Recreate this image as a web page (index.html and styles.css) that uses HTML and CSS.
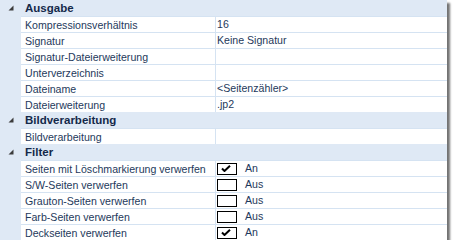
FILE: index.html
```html
<!DOCTYPE html>
<html lang="de">
<head>
    <meta charset="UTF-8">
    <title>Eigenschaften</title>
    <link rel="stylesheet" href="styles.css">
</head>
<body>
    <div class="panel">
        <div class="cat"><span class="toggle"><svg width="6" height="6" viewBox="0 0 6 6"><polygon points="5.5,0.5 5.5,5.5 0.5,5.5" fill="#3c3c3c"/></svg></span><span class="cat-title">Ausgabe</span></div>
        <div class="prop"><span class="name">Kompressionsverhältnis</span><span class="value">16</span></div>
        <div class="prop"><span class="name">Signatur</span><span class="value">Keine Signatur</span></div>
        <div class="prop"><span class="name">Signatur-Dateierweiterung</span><span class="value"></span></div>
        <div class="prop"><span class="name">Unterverzeichnis</span><span class="value"></span></div>
        <div class="prop"><span class="name">Dateiname</span><span class="value">&lt;Seitenzähler&gt;</span></div>
        <div class="prop"><span class="name">Dateierweiterung</span><span class="value">.jp2</span></div>

        <div class="cat"><span class="toggle"><svg width="6" height="6" viewBox="0 0 6 6"><polygon points="5.5,0.5 5.5,5.5 0.5,5.5" fill="#3c3c3c"/></svg></span><span class="cat-title">Bildverarbeitung</span></div>
        <div class="prop"><span class="name">Bildverarbeitung</span><span class="value"></span></div>

        <div class="cat"><span class="toggle"><svg width="6" height="6" viewBox="0 0 6 6"><polygon points="5.5,0.5 5.5,5.5 0.5,5.5" fill="#3c3c3c"/></svg></span><span class="cat-title">Filter</span></div>
        <div class="prop"><span class="name">Seiten mit Löschmarkierung verwerfen</span><span class="value"><span class="check on"><svg width="10" height="7" viewBox="0 0 10 7"><polyline points="1,3.5 3.5,6 9,0.8" fill="none" stroke="#000" stroke-width="2"/></svg></span>An</span></div>
        <div class="prop"><span class="name">S/W-Seiten verwerfen</span><span class="value"><span class="check"></span>Aus</span></div>
        <div class="prop"><span class="name">Grauton-Seiten verwerfen</span><span class="value"><span class="check"></span>Aus</span></div>
        <div class="prop"><span class="name">Farb-Seiten verwerfen</span><span class="value"><span class="check"></span>Aus</span></div>
        <div class="prop"><span class="name">Deckseiten verwerfen</span><span class="value"><span class="check on"><svg width="10" height="7" viewBox="0 0 10 7"><polyline points="1,3.5 3.5,6 9,0.8" fill="none" stroke="#000" stroke-width="2"/></svg></span>An</span></div>
    </div>
</body>
</html>
```

FILE: styles.css
```css
body {
    margin: 0;
    background-color: white;
    font-family: "Liberation Sans", Arial, sans-serif;
    font-size: 10.6px;
    color: #1e395b;
}

.panel {
    width: 447px;
    background-color: #dfe9f5;
    box-shadow: 3px 3px 2px rgba(0, 0, 0, 0.55);
}

.cat {
    display: flex;
    align-items: center;
    height: 16px;
}
.toggle {
    width: 13px;
    padding-left: 8px;
    display: flex;
    align-items: center;
}
.cat-title {
    padding-left: 4px;
    font-weight: bold;
    font-size: 11.5px;
    color: #15294a;
}

.prop {
    display: flex;
    height: 16px;
    box-sizing: border-box;
    margin-left: 21px;
    background-color: white;
    border-top: 1px solid #d5e3f2;
    line-height: 15px;
    padding-top: 1px;
}
.name {
    width: 190px;
    padding-left: 4px;
    margin-top: -1px;
    padding-top: 1px;
    border-right: 1px solid #d5e3f2;
    white-space: nowrap;
}
.value {
    flex: 1;
    display: flex;
    align-items: center;
    padding-left: 1px;
    margin-top: -1px;
}

.check {
    width: 18px;
    height: 10px;
    border: 1px solid #000;
    margin-right: 8px;
    display: flex;
    align-items: center;
    justify-content: center;
}
.check svg {
    margin-left: -2px;
}
```
